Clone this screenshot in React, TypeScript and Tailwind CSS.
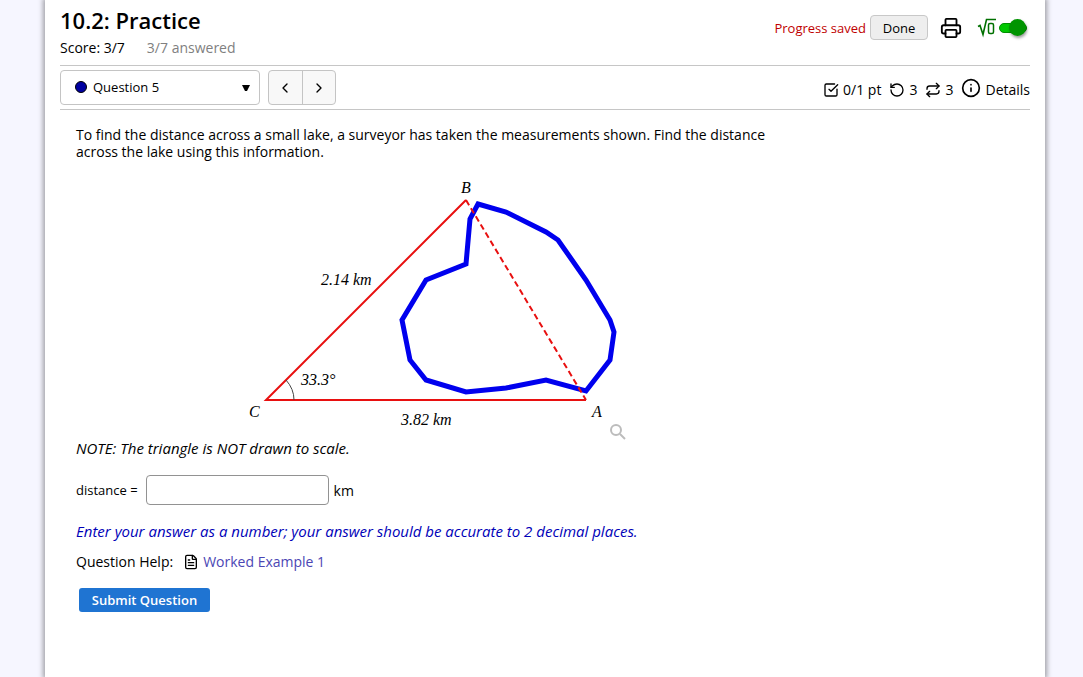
import React from 'react';
import { ChevronLeft, ChevronRight, FileText, Info, Printer, Repeat, RotateCcw, SquareCheckBig } from 'lucide-react';

const LAKE =
  '252,34 280,42 320,62 332,70 360,110 384,150 388,162 384,190 360,221 320,210 280,218 240,222 200,210 184,190 176,150 200,110 240,94 244,49';

const Header: React.FC = () => (
  <header className="flex items-start justify-between border-b border-[#c6c6c6] pt-2 pb-2">
    <div>
      <h1 className="text-[22px] leading-6 font-semibold">10.2: Practice</h1>
      <p className="mt-[7px] flex gap-[22px] text-sm leading-[18px]">
        <span>Score: 3/7</span>
        <span className="text-[#808080]">3/7 answered</span>
      </p>
    </div>
    <div className="mt-[7px] flex items-center">
      <span className="mr-1 text-[13px] leading-5 text-[#c00000]">Progress saved</span>
      <button type="button" className="h-[25px] w-[58px] rounded border border-[#c8c8c8] bg-[#eeeeee] text-[13px] leading-5">
        Done
      </button>
      <button type="button" aria-label="Print" className="ml-3">
        <Printer className="h-[22px] w-[22px]" />
      </button>
      <label className="mr-[3px] ml-[15px] flex items-center">
        <svg viewBox="0 0 20 20" className="h-5 w-5" fill="none" stroke="#007000" aria-hidden="true">
          <path d="M1 8.5l2-1 3 9L9.5 1.5H19" strokeWidth="1.6" />
          <rect x="11.5" y="5.5" width="5" height="10" rx="1.5" strokeWidth="1.5" />
        </svg>
        <input type="checkbox" defaultChecked aria-label="Math equation display" className="peer sr-only" />
        <span className="ml-[2px] flex h-[10px] w-7 items-center justify-end rounded-full border border-[#009000] bg-[#00c800]">
          <span className="h-[17px] w-[17px] shrink-0 rounded-full bg-[#009400] shadow-[1px_2px_3px_rgba(0,0,0,0.4)]"></span>
        </span>
      </label>
    </div>
  </header>
);

const QuestionBar: React.FC = () => (
  <div className="flex items-center justify-between border-b border-[#c6c6c6] py-1">
    <div className="flex gap-2">
      <div className="relative">
        <select
          aria-label="Question"
          className="h-[35px] w-[200px] appearance-none rounded border border-[#c4c4c4] bg-white pl-8 text-[13px]"
        >
          <option>Question 5</option>
        </select>
        <span className="pointer-events-none absolute top-[11px] left-[15px] h-3 w-3 rounded-full border border-black bg-[#0000a0]"></span>
        <svg viewBox="0 0 8 6" className="pointer-events-none absolute top-[15px] right-[10px] h-[6px] w-2" aria-hidden="true">
          <path d="M0 0h8L5 6H3z" />
        </svg>
      </div>
      <div className="flex h-[35px] w-[68px] divide-x divide-[#c4c4c4] rounded border border-[#c4c4c4] bg-[#f8f8f8]">
        <button type="button" aria-label="Previous question" className="flex flex-1 items-center justify-center">
          <ChevronLeft className="h-4 w-4" />
        </button>
        <button type="button" aria-label="Next question" className="flex flex-1 items-center justify-center">
          <ChevronRight className="h-4 w-4" />
        </button>
      </div>
    </div>
    <div className="flex items-center pt-1 text-sm leading-5">
      <SquareCheckBig className="mr-1 h-4 w-4" />
      <span className="mr-2">0/1 pt</span>
      <RotateCcw className="mr-1 h-4 w-4" />
      <span className="mr-2">3</span>
      <Repeat className="mr-1 h-4 w-4" />
      <span className="mr-2">3</span>
      <button type="button" className="flex items-center gap-1">
        <Info className="mb-1 h-5 w-5" />
        Details
      </button>
    </div>
  </div>
);

const LakeFigure: React.FC = () => (
  <div className="ml-[150px] flex items-end">
    <svg viewBox="0 0 400 270" className="h-[270px] w-[400px]" fill="none" role="img" aria-label="Triangle ABC across a lake">
      <polygon points={LAKE} stroke="#0000ee" strokeWidth="5" />
      <path d="M240 30L40 230H360" stroke="#e81010" strokeWidth="2" />
      <path d="M240 30L360 230" stroke="#e81010" strokeWidth="2" strokeDasharray="6 3.5" />
      <path d="M60 210Q68 219 68 230" stroke="#444" />
      <g fill="#000" className="font-['Liberation_Serif',serif] text-base italic">
        <text x="235" y="23">B</text>
        <text x="23" y="247">C</text>
        <text x="366" y="247">A</text>
        <text x="95" y="115">2.14 km</text>
        <text x="75" y="215">33.3°</text>
        <text x="175" y="255">3.82 km</text>
      </g>
      <g stroke="#bcbcbc" strokeWidth="2">
        <circle cx="390" cy="260" r="5" />
        <path d="M394 264l5 5" />
      </g>
    </svg>
  </div>
);

export default function App() {
  return (
    <div className="flex min-h-screen bg-[#f6f6ff] pr-[38px] pl-[45px] font-['Open_Sans',sans-serif] text-sm leading-[17px] text-black">
      <div className="min-h-screen flex-1 bg-white px-[15px] shadow-[0_0_5px_2px_rgba(0,0,0,0.35)]">
        <Header />
        <QuestionBar />
        <main className="px-4 pt-4">
          <p className="max-w-[700px]">
            To find the distance across a small lake, a surveyor has taken the measurements shown. Find the distance across
            the lake using this information.
          </p>
          <div className="pt-[10px]">
            <LakeFigure />
          </div>
          <p className="text-[15px] italic">NOTE: The triangle is NOT drawn to scale.</p>
          <div className="mt-[18px] flex items-center">
            <label htmlFor="distance" className="mr-2 text-[13px]">
              distance =
            </label>
            <input id="distance" type="text" className="h-[30px] w-[183px] rounded border border-[#929292] px-2" />
            <span className="ml-[5px]">km</span>
          </div>
          <p className="mt-[18px] text-[15px] text-[#0000b8] italic">
            Enter your answer as a number; your answer should be accurate to 2 decimal places.
          </p>
          <div className="mt-[13px] flex items-center">
            <span className="mr-[10px]">Question Help:</span>
            <a href="#example" className="flex items-center gap-1 text-[#4b46b4]">
              <FileText className="h-4 w-4 text-black" />
              Worked Example 1
            </a>
          </div>
          <button type="button" className="mt-[18px] ml-[3px] h-6 w-[131px] rounded-[3px] bg-[#1f74d2] text-[13px] font-semibold text-white">
            Submit Question
          </button>
        </main>
      </div>
    </div>
  );
}
